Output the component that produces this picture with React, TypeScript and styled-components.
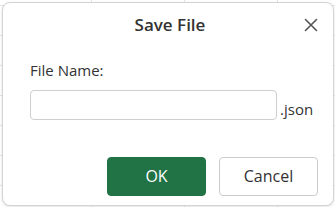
import styled, { createGlobalStyle } from "styled-components";

const GlobalStyle = createGlobalStyle`
	html, body {
		margin: 0;
		padding: 0;
		width: 335px;
		height: 207px;
		overflow: hidden;
		background-color: #ffffff;
		background-image:
			linear-gradient(to right, #e4e4e4 1px, transparent 1px),
			linear-gradient(to bottom, #e4e4e4 1px, transparent 1px);
		background-size: 93px 100%, 100% 30px;
		background-position: 91px 0, 0 5px;
		font-family: "Open Sans", "Noto Sans", sans-serif;
	}
`;

function SaveDialog() {
	return (
		<Dialog>
			<Header>
				<Title>Save File</Title>
				<CloseButton aria-label="Close">
					<svg width="14" height="14" viewBox="0 0 14 14">
						<path
							d="M1.5 1.5 L12.5 12.5 M12.5 1.5 L1.5 12.5"
							stroke="#555"
							strokeWidth="1.6"
							strokeLinecap="round"
						/>
					</svg>
				</CloseButton>
			</Header>
			<Body>
				<Label>File Name:</Label>
				<InputRow>
					<NameInput type="text" />
					<Extension>.json</Extension>
				</InputRow>
			</Body>
			<Footer>
				<Button $primary>OK</Button>
				<Button>Cancel</Button>
			</Footer>
		</Dialog>
	);
}

export default function App() {
	return (
		<>
			<GlobalStyle />
			<Page>
				<SaveDialog />
			</Page>
		</>
	);
}

const Page = styled.div`
	width: 335px;
	height: 207px;
	box-sizing: border-box;
	padding: 2px 1px 1px 2px;
	display: flex;
`;

const Dialog = styled.div`
	flex: 1;
	background: #fff;
	border: 1px solid #d4d4d4;
	border-radius: 8px;
	box-shadow: 0 1px 3px rgba(0, 0, 0, 0.12);
	display: flex;
	flex-direction: column;
	box-sizing: border-box;
`;

const Header = styled.div`
	position: relative;
	height: 42px;
	display: flex;
	align-items: center;
	justify-content: center;
`;

const Title = styled.h1`
	margin: 0;
	font-size: 17px;
	font-weight: 600;
	color: #333;
	padding-left: 4px;
`;

const CloseButton = styled.button`
	position: absolute;
	right: 14px;
	top: 14px;
	width: 16px;
	height: 16px;
	padding: 0;
	border: none;
	background: none;
	display: flex;
	align-items: center;
	justify-content: center;
`;

const Body = styled.div`
	padding: 16px 0 0 27px;
	display: flex;
	flex-direction: column;
	gap: 11px;
`;

const Label = styled.div`
	font-size: 15px;
	color: #333;
	line-height: 18px;
`;

const InputRow = styled.div`
	display: flex;
	align-items: flex-end;
	gap: 3px;
`;

const NameInput = styled.input`
	width: 247px;
	height: 30px;
	box-sizing: border-box;
	border: 1px solid #cfcfcf;
	border-radius: 4px;
	outline: none;
	padding: 0 6px;
	font-family: inherit;
`;

const Extension = styled.span`
	font-size: 15px;
	color: #333;
	line-height: 22px;
`;

const Footer = styled.div`
	margin-top: auto;
	padding: 0 15px 9px 0;
	display: flex;
	justify-content: flex-end;
	gap: 13px;
`;

const Button = styled.button<{ $primary?: boolean }>`
	width: 99px;
	height: 39px;
	box-sizing: border-box;
	border-radius: 4px;
	font-family: inherit;
	font-size: 16px;
	padding: 0 0 2px;
	border: 1px solid ${(p) => (p.$primary ? "#217346" : "#cccccc")};
	background: ${(p) => (p.$primary ? "#217346" : "#ffffff")};
	color: ${(p) => (p.$primary ? "#ffffff" : "#333333")};
`;
